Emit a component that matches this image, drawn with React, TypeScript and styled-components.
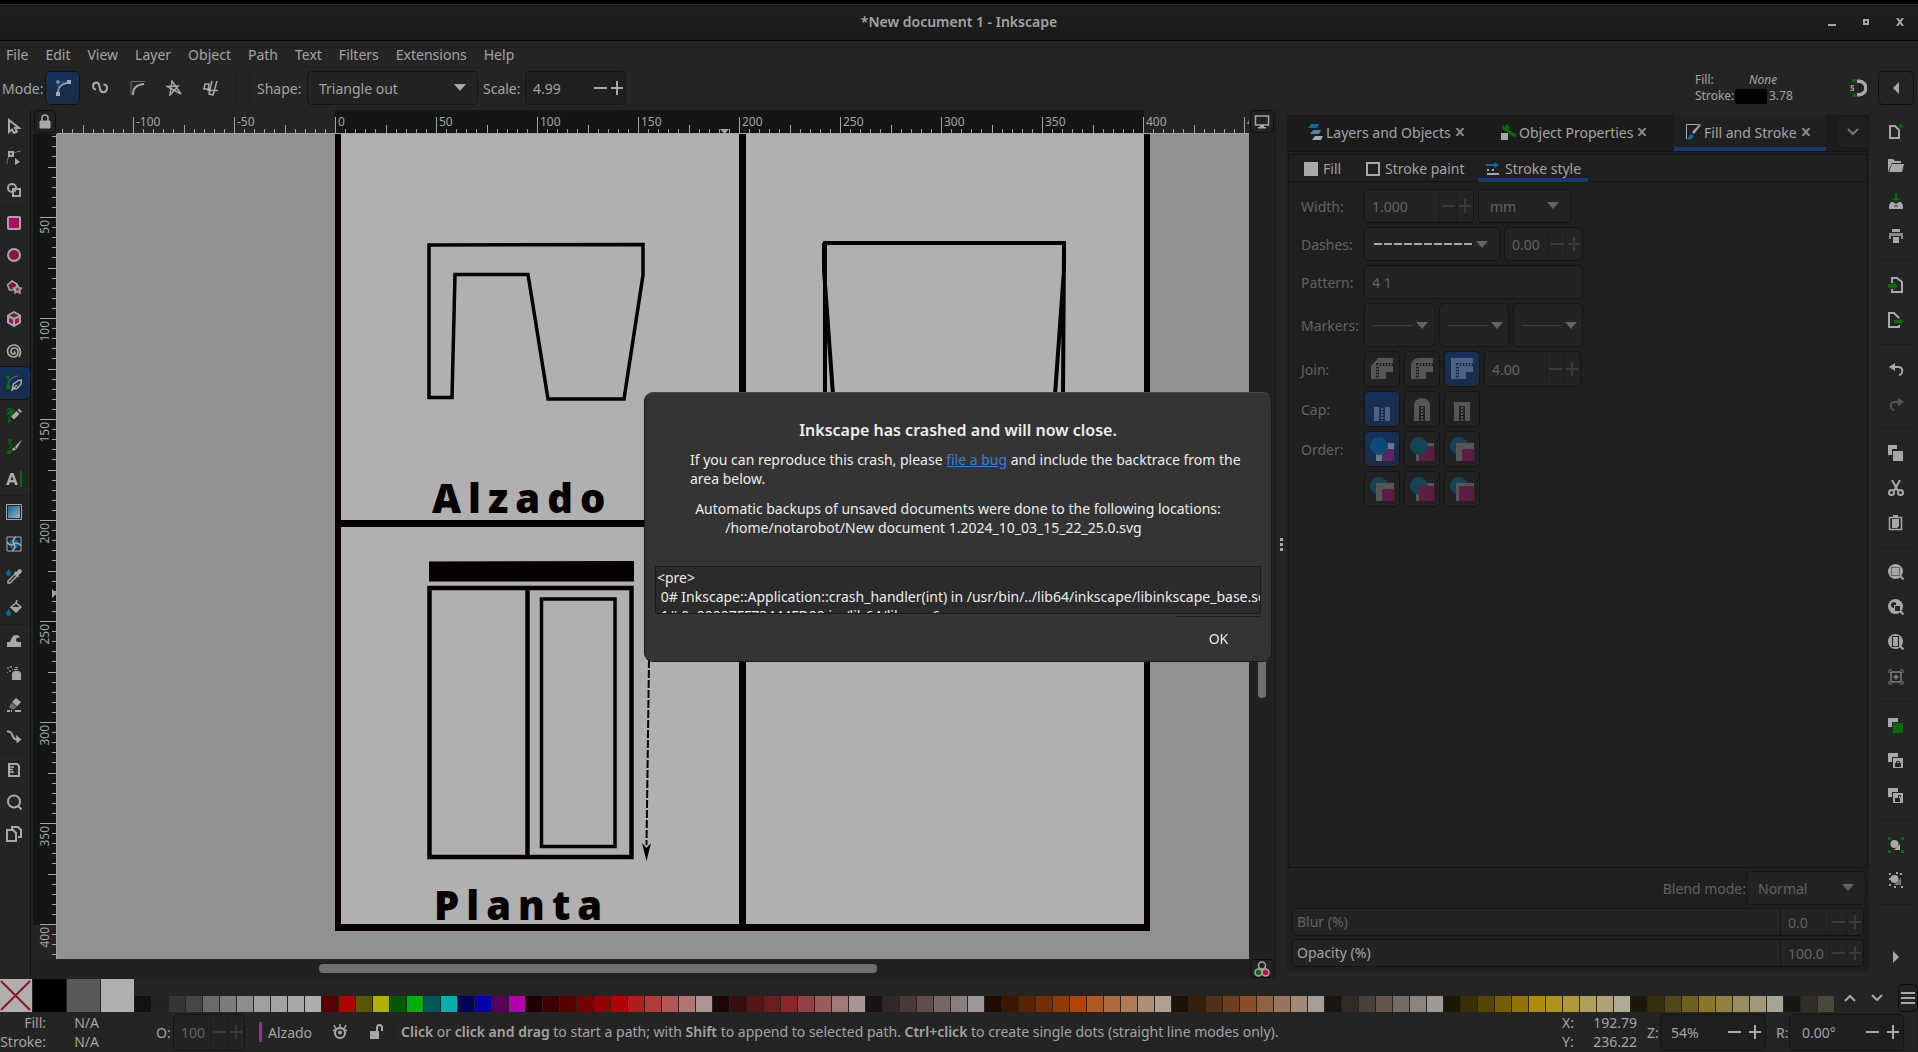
import React from "react";
import styled, { createGlobalStyle, css } from "styled-components";

const c = {
  text: "#a4a4a4",
  dim: "#636363",
  faint: "#3a3a3a",
  icon: "#a8a8a8",
  bg: "#242424",
  panel: "#1f1f1f",
  dark: "#1b1b1b",
  line: "#141414",
  accent: "#153a6f",
  green: "#046c0b",
  pink: "#b00a5f",
  blue: "#0a689c",
  ink: "#060000",
  page: "#b0b0b0",
  desk: "#919191",
};

const Global = createGlobalStyle`
  * { box-sizing: border-box; }
  body { margin: 0; background: ${c.bg}; }
  body, button, input, select, textarea {
    font-family: "Noto Sans", "Open Sans", sans-serif;
    font-size: 14px;
    line-height: 19px;
    color: ${c.text};
  }
  button, input, select, textarea { margin: 0; padding: 0; border: 0; background: none; outline: 0; }
  svg { display: block; flex: none; }
`;

/* ---------- shared controls ---------- */

const activeFill = css`
  background: linear-gradient(#14305a, #1a2c47);
`;

const Window = styled.div`
  display: flex;
  flex-direction: column;
  min-height: 100vh;
  border-top: 4px solid #000;
`;

const Field = styled.span<{ $w: number; $h?: number; $lit?: boolean }>`
  position: relative;
  display: inline-flex;
  align-items: stretch;
  flex: none;
  width: ${(p) => p.$w}px;
  height: ${(p) => p.$h ?? 34}px;
  border: 1px solid ${c.line};
  border-radius: 5px;
  background: ${(p) => (p.$lit ? "#1f1f1f" : "#232323")};
`;

const FieldInput = styled.input<{ $dim?: boolean; $pad?: number }>`
  flex: 1;
  min-width: 0;
  width: 0;
  padding-left: ${(p) => p.$pad ?? 7}px;
  color: ${(p) => (p.$dim ? c.dim : c.text)};
`;

const StepButton = styled.button<{ $dim?: boolean; $w?: number }>`
  display: grid;
  place-items: center;
  width: ${(p) => p.$w ?? 17}px;
  border-left: 1px solid #1d1d1d;
  color: ${(p) => (p.$dim ? c.faint : c.icon)};
`;

const Picker = styled.select<{ $dim?: boolean; $pad?: number }>`
  appearance: none;
  width: 100%;
  padding: 0 28px 0 ${(p) => p.$pad ?? 11}px;
  color: ${(p) => (p.$dim ? c.dim : c.text)};
`;

const PickerArrow = styled.svg<{ $dim?: boolean }>`
  position: absolute;
  right: 11px;
  top: 50%;
  margin-top: -4px;
  pointer-events: none;
  color: ${(p) => (p.$dim ? c.dim : c.icon)};
`;

const MINUS = "M0 6h13v2H0z";
const PLUS = "M0 6h5V0h2v6h5v2H7v6H5V8H0z";

function Steps({ label, dim, w }: { label: string; dim?: boolean; w?: number }) {
  return (
    <>
      <StepButton type="button" $dim={dim} $w={w} aria-label={`Decrease ${label}`}>
        <svg width="13" height="14"><path d={MINUS} fill="currentColor" /></svg>
      </StepButton>
      <StepButton type="button" $dim={dim} $w={w} aria-label={`Increase ${label}`}>
        <svg width="12" height="14"><path d={PLUS} fill="currentColor" /></svg>
      </StepButton>
    </>
  );
}

type SpinProps = { id?: string; label: string; value: string; w: number; h?: number; dim?: boolean; step?: number; pad?: number; lit?: boolean };
function Spin({ id, label, value, w, h, dim, step, pad, lit }: SpinProps) {
  return (
    <Field $w={w} $h={h} $lit={lit}>
      <FieldInput id={id} aria-label={id ? undefined : label} defaultValue={value} $dim={dim} $pad={pad} />
      <Steps label={label} dim={dim} w={step} />
    </Field>
  );
}

function Drop({ id, label, value, w, dim }: { id?: string; label: string; value: string; w: number; dim?: boolean }) {
  return (
    <Field $w={w}>
      <Picker id={id} aria-label={id ? undefined : label} $dim={dim} defaultValue={value}>
        <option>{value}</option>
      </Picker>
      <PickerArrow width="12" height="7" $dim={dim}><path d="M0 0h12L6 7z" fill="currentColor" /></PickerArrow>
    </Field>
  );
}

function Glyph({ children, size = 16 }: { children: React.ReactNode; size?: number }) {
  return (
    <svg width={size} height={size} viewBox="0 0 16 16" fill="none" stroke="none" aria-hidden="true">
      {children}
    </svg>
  );
}

/* ---------- title, menu, tool options ---------- */

const TitleBar = styled.header`
  display: grid;
  grid-template-columns: 1fr auto 1fr;
  align-items: center;
  height: 37px;
  padding-bottom: 2px;
  border-top: 1px solid #2b2b2b;
  border-bottom: 1px solid #080808;
  background: linear-gradient(#1e1e1e, #1a1a1a);
`;
const Title = styled.h1`
  grid-column: 2;
  margin: 0;
  font-size: 14px;
  line-height: 19px;
  font-weight: 600;
`;
const WindowButtons = styled.div`
  display: flex;
  justify-content: flex-end;
  gap: 18px;
  padding-right: 10px;
`;
const WindowButton = styled.button`
  display: grid;
  place-items: center;
  width: 16px;
  height: 20px;
`;

const MenuBar = styled.nav`
  display: flex;
  gap: 17px;
  height: 27px;
  padding: 4px 6px;
  border-bottom: 1px solid #202020;
`;
const MenuItem = styled.button`
  height: 19px;
`;

const ToolOptions = styled.div`
  display: flex;
  align-items: center;
  height: 42px;
  padding: 0 4px 2px 2px;
`;
const OptionLabel = styled.label<{ $w: number; $before?: number }>`
  width: ${(p) => p.$w}px;
  margin-left: ${(p) => p.$before ?? 0}px;
  white-space: nowrap;
`;
const ModeGroup = styled.div`
  display: flex;
  gap: 2px;
`;
const ModeButton = styled.button<{ $on?: boolean }>`
  display: grid;
  place-items: center;
  width: 35px;
  height: 34px;
  border: 1px solid ${(p) => (p.$on ? c.line : "transparent")};
  border-radius: 5px;
  ${(p) => p.$on && activeFill}
`;
const Divider = styled.i<{ $gap: number }>`
  width: 1px;
  height: 34px;
  margin-left: ${(p) => p.$gap}px;
  background: #1f1f1f;
`;
const StyleSummary = styled.div`
  display: grid;
  grid-template-columns: 38px 32px auto;
  grid-template-rows: 16px 16px;
  column-gap: 2px;
  margin-left: auto;
  margin-right: 56px;
  width: 98px;
  font-size: 12px;
  line-height: 16px;
  & em { grid-column: 2 / 4; padding-left: 14px; }
`;
const StrokeSwatch = styled.i`
  align-self: center;
  height: 15px;
  border-radius: 2px;
  background: ${c.ink};
`;
const SnapButton = styled.button`
  width: 18px;
  margin-right: 11px;
`;
const CollapseButton = styled.button`
  display: grid;
  place-items: center;
  width: 36px;
  height: 34px;
  border: 1px solid #101010;
  border-radius: 5px;
`;

const S = { stroke: c.icon, strokeWidth: 2 };
const modes: [string, React.ReactNode][] = [
  ["Bézier path", <><path d="M3 13C3 7 7 3 13 3" {...S} strokeWidth={1.5} /><path d="M1 12h4v4H1zM12 0h4v4h-4z" fill={c.icon} /><path d="M3 2v8M4 2h8" stroke="#4a6486" /><circle cx="3" cy="2" r="2" fill="#6880a0" /></>],
  ["Spiro path", <path d="M4 9.500C0 9.500 0 2.500 4.500 2.500 8 2.500 7 6 8 9c1 5 7 4 7-1 0-2.500-1-3.500-3.500-3.500" {...S} />],
  ["BSpline path", <><path d="M2 15V1.500h14" stroke="#6a6a6a" /><path d="M4 15C4 8 7 5 15 4" {...S} /></>],
  ["Straight segments", <path d="M15 14 1 6.500 12 6 4 15 6 1 15 14" {...S} strokeWidth={1.500} />],
  ["Paraxial segments", <path d="M15 10.500H5L6 4H2L1 9h7M9 1 7 9M14 1l-4 14-4-1 1-4" {...S} strokeWidth={1.500} />],
];

function TopBars() {
  return (
    <>
      <TitleBar>
        <Title>*New document 1 - Inkscape</Title>
        <WindowButtons>
          <WindowButton aria-label="Minimize"><svg width="8" height="10"><path d="M0 7h8v2H0z" fill={c.icon} /></svg></WindowButton>
          <WindowButton aria-label="Maximize"><svg width="6" height="6"><path d="M1 1h4v4H1z" stroke={c.icon} strokeWidth="2" fill="none" /></svg></WindowButton>
          <WindowButton aria-label="Close"><svg width="8" height="8"><path d="M1 0l6 8M7 0L1 8" stroke={c.icon} strokeWidth="2" /></svg></WindowButton>
        </WindowButtons>
      </TitleBar>
      <MenuBar>
        {["File", "Edit", "View", "Layer", "Object", "Path", "Text", "Filters", "Extensions", "Help"].map((m) => (
          <MenuItem key={m}>{m}</MenuItem>
        ))}
      </MenuBar>
      <ToolOptions>
        <OptionLabel as="span" $w={43}>Mode:</OptionLabel>
        <ModeGroup>
          {modes.map(([name, art], i) => (
            <ModeButton key={name} $on={i === 0} aria-label={name} aria-pressed={i === 0}><Glyph>{art}</Glyph></ModeButton>
          ))}
        </ModeGroup>
        <Divider $gap={7} />
        <Divider $gap={13} />
        <OptionLabel htmlFor="shape" $w={50} $before={7}>Shape:</OptionLabel>
        <Drop id="shape" label="Shape" value="Triangle out" w={171} />
        <OptionLabel htmlFor="scale" $w={42} $before={5}>Scale:</OptionLabel>
        <Spin id="scale" label="Scale" value="4.99" w={101} lit />
        <StyleSummary>
          <span>Fill:</span><em>None</em>
          <span>Stroke:</span><StrokeSwatch /><span>3.78</span>
        </StyleSummary>
        <SnapButton aria-label="Snapping">
          <Glyph size={18}>
            <path d="M7 2h2a6 6 0 0 1 0 12H7" stroke={c.icon} strokeWidth="3" />
            <path d="M3 0h3v3H3zM3 13h3v3H3z" fill={c.green} />
            <path d="M4.500 6H2v2h2v2H1" stroke={c.icon} />
          </Glyph>
        </SnapButton>
        <CollapseButton aria-label="Show snap options"><svg width="6" height="12"><path d="M6 0v12L0 6z" fill={c.icon} /></svg></CollapseButton>
      </ToolOptions>
    </>
  );
}

/* ---------- left toolbox ---------- */

const Main = styled.main`
  display: flex;
  flex: 1;
  min-height: 0;
`;
const Toolbox = styled.aside`
  display: flex;
  flex-direction: column;
  flex: none;
  width: 31px;
  margin-right: 2px;
  border-right: 1px solid #121212;
`;
const ToolGroup = styled.div`
  display: flex;
  flex-direction: column;
  & + & { border-top: 1px solid #1e1e1e; }
`;
const Tool = styled.button<{ $on?: boolean }>`
  display: flex;
  align-items: center;
  width: 30px;
  height: 32px;
  padding-left: 6px;
  ${(p) => p.$on && css`${activeFill} border-radius: 0 5px 5px 0; box-shadow: 0 0 0 1px ${c.line};`}
`;

const toolGroups: [string, React.ReactNode][][] = [
  [
    ["Select", <path d="M3 2v12l3-2.500 2 3.500 3-1.500-2-3.500h4z" {...S} />],
    ["Node", <><path d="M1 14C1 8 3 3 15 1" stroke="#777" /><path d="M3 2h4v4H3z" {...S} /><path d="M9 8v7l5-3z" fill={c.icon} /></>],
    ["Shape builder", <><circle cx="6" cy="6" r="4" {...S} /><path d="M7 7h7v7H7z" {...S} /></>],
  ],
  [
    ["Rectangle", <rect x="2" y="2" width="12" height="12" rx="1" fill={c.pink} {...S} />],
    ["Ellipse", <circle cx="8" cy="8" r="6" fill="#8c1250" {...S} />],
    ["Star", <><path d="M6 2l5 3-1.500 6h-6L1.500 6z" fill="#7c1648" {...S} strokeWidth={1.500} /><path d="M11.500 6l1.300 2.700 2.700.4-2 2 .5 3-2.500-1.400L9 14l.5-3-2-2 2.700-.3z" fill="#7a3b58" {...S} strokeWidth={1.500} /></>],
    ["3D box", <><path d="M8 1l6 3.500v7L8 15l-6-3.500v-7z" fill={c.pink} {...S} /><path d="M8 2l5 3-5 2.500L3 5z" fill="#5a2540" /><path d="M2 5l6 3 6-3M8 8v7" {...S} /></>],
    ["Spiral", <path d="M13 14c3-5 1-12-5-12-4 0-6.500 3-6.500 6S4 14 7.500 14 12 11 12 8.500 10 5 8 5 5 6.500 5 8.500 6.500 11 8 11s1.500-2 0-2.500" {...S} strokeWidth={1.700} />],
    ["Pen", <><path d="M2 11C2 5 6 2 12 1" stroke="#5c7391" /><path d="M0 10h4v4H0z" fill={c.green} /><path d="M2 1v9" stroke={c.green} /><circle cx="2" cy="2" r="2" fill={c.green} /><path d="M6 15l1.500-6 5-3.500L15.500 5 15 9l-4 4.500-4 .5zM7 14l4-4" stroke={c.icon} strokeWidth="1.500" /></>],
    ["Pencil", <><path d="M1 3c3-3 6-2 2 2s2 1 3-1 3-1 1 1-3 3-4 6" stroke={c.green} strokeWidth="1.500" /><path d="M2 11l4 3-4 2z" fill={c.green} /><path d="M5 9.500L10.500 4l3 3L8 12.500zM11.500 3l1.500-1.500 3 3L14.500 6z" fill={c.icon} /></>],
    ["Calligraphy", <><path d="M1 1h4L3 4l3 2-3 4" stroke={c.green} strokeWidth="1.500" /><path d="M1 14c1-3 2-3 4-3l1 2c-1 2-3 3-5 2z" fill={c.green} /><path d="M6 10l1 2 3-1.500L8.500 8zM9 7.500l6-6 .5.500-5 8z" fill={c.icon} /></>],
    ["Text", <><path d="M0 14L4.500 2h3L12 14H9l-.8-2.500H3.800L3 14zM4.600 9h2.800L6 5z" fill={c.icon} /><path d="M14 0h2v16h-2z" fill={c.green} /></>],
  ],
  [
    ["Gradient", <><defs><linearGradient id="tg" x2="1" y2="1"><stop stopColor="#08639a" /><stop offset="1" stopColor="#9bb4c4" /></linearGradient></defs><path d="M.5.5h15v15H.5z" stroke={c.icon} /><path d="M2 2h12v12H2z" fill="url(#tg)" /></>],
    ["Mesh gradient", <><path d="M1 1h14v14H1z" stroke={c.icon} /><circle cx="8" cy="8" r="5" fill={c.blue} /><path d="M8 8C6 5 7 3 10 1M8 8c3-2 5-1 7 2M8 8c2 3 1 5-2 7M8 8c-3 2-5 1-7-2" stroke={c.icon} strokeWidth="1.500" /></>],
    ["Dropper", <><path d="M2.500 1C4 3 5 4 5 5.500a2.500 2.500 0 0 1-5 0C0 4 1.500 3 2.500 1z" fill={c.blue} /><path d="M9 6l2 2-7 7H2v-2z" stroke={c.icon} strokeWidth="1.500" /><path d="M8 4.500l1.500-1 1 .5L13 1l3 1-.5 2.500L12.500 7l.5 1-1 1.500z" fill={c.icon} /></>],
    ["Paint bucket", <><path d="M2.500 9C4 11 5 12 5 13.500a2.500 2.500 0 0 1-5 0C0 12 1.500 11 2.500 9z" fill={c.blue} /><path d="M4 7h11l-5 5.500z" fill={c.icon} /><path d="M5 7l5-4 5 4-5 5zM10 3l1-3" stroke={c.icon} strokeWidth="1.500" /></>],
  ],
  [
    ["Tweak", <path d="M1 14V9h3c1-2 2-7 6-7 3 0 4 2 4 3-2-1-4 0-4 2s2 2 5 2v5z" fill={c.icon} />],
    ["Spray", <><path d="M6 8l2-2h5l2 2v7H6zM8 4h4v1H8zM9 2h3v1H9z" fill={c.icon} /><path d="M1 2h2v2H1zM4 1h2v2H4zM3 5h2v2H3zM1 7h1v1H1zM6 4h1v1H6z" fill="#777" /></>],
    ["Eraser", <><path d="M6 5l4-4 5 4-4 4.500z" fill={c.icon} /><path d="M5.500 5.500l5 4.500L7 13l-4-3z" fill="#6c6c6c" /><path d="M1 13h3v2H1zM9 13h6v2H9zM5 13h1v2H5z" fill={c.icon} /></>],
    ["Connector", <><path d="M1 2.500c8-1 3 8 10 8" {...S} /><path d="M10 6l5.500 4.500-5 4z" fill={c.icon} /></>],
  ],
  [
    ["Measure", <><path d="M3 2h8l2 2v10H3z" {...S} /><path d="M4 5h4M4 7.500h3M4 10h4" stroke={c.icon} strokeWidth="1.500" /></>],
    ["Zoom", <><circle cx="8" cy="7.500" r="6" {...S} /><path d="M12 12l3.500 3.500" {...S} /></>],
    ["Pages", <><path d="M1 4h6l3 3v8H1zM6 3V1h6l3 3v7h-3" {...S} /></>],
  ],
];

/* ---------- canvas with rulers ---------- */

const CanvasGrid = styled.section`
  display: grid;
  grid-template-columns: 24px minmax(0, 1fr) 26px;
  grid-template-rows: 24px minmax(0, 1fr) 20px;
  flex: 1;
  min-width: 0;
  background: #212121;
`;
const CornerButton = styled.button`
  display: grid;
  place-items: center;
  margin: 0 1px 1px;
  border: 1px solid #0e0e0e;
  border-radius: 5px;
  background: #222;
`;
const Fill = styled.svg`
  width: 100%;
  height: 100%;
  overflow: hidden;
`;
const HTrack = styled.div`
  grid-column: 1 / 3;
  display: flex;
  align-items: center;
  padding-left: 286px;
  padding-bottom: 2px;
`;
const HThumb = styled.div`
  width: 60%;
  height: 9px;
  border-radius: 4px;
  background: #6f6f6f;
`;
const VTrack = styled.div`
  display: flex;
  justify-content: center;
  padding-top: 300px;
`;
const VThumb = styled.div`
  width: 8px;
  height: 264px;
  border-radius: 4px;
  background: #6f6f6f;
`;

const UNIT = 2.02;
const marks = (from: number, to: number) => {
  const out: number[] = [];
  for (let v = from; v <= to; v += 5) out.push(v);
  return out;
};
const tickLen = (v: number) => (v % 50 === 0 ? 16 : v % 25 === 0 ? 8 : 4);

function HRuler() {
  return (
    <Fill fontSize="12" fill={c.text}>
      <rect width="100%" height="24" fill={c.bg} />
      <rect x="278" width="809" height="24" fill="#141615" />
      {marks(-135, 450).map((v) => {
        const x = Math.floor(278.5 + v * UNIT);
        const len = tickLen(v);
        return (
          <React.Fragment key={v}>
            <rect x={x} y={23 - len} width="1" height={len} />
            {len === 16 && <text x={x + 3} y="16">{v}</text>}
          </React.Fragment>
        );
      })}
      <path d="M663 19h9l-4.500 5z" />
      <rect y="23" width="100%" height="1" />
    </Fill>
  );
}

function VRuler() {
  return (
    <Fill fontSize="12" fill={c.text}>
      <rect width="24" height="100%" fill={c.bg} />
      <rect width="24" height="791" fill="#141615" />
      {marks(10, 415).map((v) => {
        const y = Math.floor(-17.5 + v * UNIT);
        const len = tickLen(v);
        return (
          <React.Fragment key={v}>
            <rect x={23 - len} y={y} width={len} height="1" />
            {len === 16 && <text transform={`translate(16 ${y + 3}) rotate(-90)`} textAnchor="end">{v}</text>}
          </React.Fragment>
        );
      })}
      <path d="M19 455v9l5-4.500z" />
      <rect x="23" width="1" height="100%" />
    </Fill>
  );
}

const Caption = styled.text`
  font: 900 40px "Noto Sans", sans-serif;
  letter-spacing: 7px;
  fill: ${c.ink};
`;

function Drawing() {
  return (
    <Fill>
      <rect width="100%" height="100%" fill={c.desk} />
      <g transform="translate(-57 -134)">
        <path d="M335 134h809v791H335z" fill={c.page} />
        <path d="M335 134h6v797h-6zM739 134h7v797h-7zM1144 134h6v797h-6zM335 520h815v7H335zM335 924h815v7H335z" fill={c.ink} />
        <g fill="none" stroke={c.ink} strokeWidth="4">
          <path d="M429 245L643 244.500V275L624 399H548L528 274.500H455L452 397.500H429z" strokeWidth="3.500" />
          <path d="M825 395V243H1064L1063 395M824 243v27l9 125M1064 243v27l-9 125" />
          <path d="M429.500 588h202v269h-202zM527.500 588v269" strokeWidth="4.500" />
          <path d="M541.500 599h73.500v247.500h-73.500z" strokeWidth="3.500" />
          <path d="M649 660L646.500 845" strokeWidth="2" strokeDasharray="8 2" />
        </g>
        <path d="M429 561.500L634 561v20.500H429zM642 843l4.500 5 4.500-5-4.500 18z" fill={c.ink} />
        <Caption x="432" y="513">Alzado</Caption>
        <Caption x="434" y="920">Planta</Caption>
      </g>
    </Fill>
  );
}

function Canvas() {
  return (
    <CanvasGrid>
      <CornerButton aria-label="Lock guides">
        <svg width="12" height="15"><path d="M1 7h10v7H1z" fill={c.icon} stroke={c.icon} /><path d="M3 7V4q0-3 3-3t3 3v3" stroke={c.icon} strokeWidth="1.500" fill="none" /></svg>
      </CornerButton>
      <HRuler />
      <CornerButton aria-label="Display mode">
        <svg width="16" height="14"><path d="M1.500 1h13v9h-13z" fill="none" stroke={c.icon} strokeWidth="1.500" /><path d="M6 10h4v2h2v1.500H4V12h2z" fill={c.icon} /></svg>
      </CornerButton>
      <VRuler />
      <Drawing />
      <VTrack><VThumb /></VTrack>
      <HTrack><HThumb /></HTrack>
      <CornerButton aria-label="Color management">
        <svg width="16" height="16"><g stroke={c.icon} strokeWidth="1.500" fill="none"><circle cx="8" cy="4.500" r="3.500" /><circle cx="4.500" cy="11.500" r="3.500" fill={c.green} /><circle cx="11.500" cy="11.500" r="3.500" fill={c.pink} /></g></svg>
      </CornerButton>
    </CanvasGrid>
  );
}

/* ---------- docked dialogs ---------- */

const Splitter = styled.div`
  display: grid;
  place-items: center;
  flex: none;
  width: 12px;
  border-left: 1px solid #1b1b1b;
`;
const Dock = styled.section`
  display: flex;
  flex-direction: column;
  flex: none;
  width: 582px;
  margin: 5px 0 7px;
  background: ${c.panel};
`;
const DockTabs = styled.div`
  display: flex;
  height: 37px;
  margin-bottom: 2px;
  border-bottom: 1px solid ${c.line};
  background: ${c.dark};
`;
const DockTab = styled.div<{ $w: number; $on?: boolean; $pad: number }>`
  display: flex;
  align-items: center;
  gap: 2px;
  width: ${(p) => p.$w}px;
  padding-left: ${(p) => p.$pad}px;
  border-bottom: ${(p) => (p.$on ? `4px solid ${c.accent}` : "0")};
  padding-top: ${(p) => (p.$on ? 2 : 0)}px;
  padding-bottom: ${(p) => (p.$on ? 0 : 2)}px;
  background: ${(p) => (p.$on ? "#202020" : "none")};
  white-space: nowrap;
`;
const CloseTab = styled.button`
  display: grid;
  place-items: center;
  width: 14px;
  height: 18px;
`;
const TabMenu = styled.button`
  display: grid;
  place-items: center;
  width: 30px;
  height: 30px;
  margin: 2px 1px 0 auto;
  border-radius: 5px;
  background: #1f1f1f;
`;
const Frame = styled.div`
  flex: 1;
  margin: 0 1px;
  border: 1px solid ${c.line};
`;
const SubTabs = styled.div`
  display: flex;
  height: 27px;
  padding-left: 7px;
  border-bottom: 1px solid ${c.line};
`;
const SubTab = styled.button<{ $w: number; $on?: boolean }>`
  display: flex;
  align-items: center;
  gap: 5px;
  width: ${(p) => p.$w}px;
  height: 27px;
  padding: ${(p) => (p.$on ? "4px" : "0")} 8px 0;
  border-bottom: ${(p) => (p.$on ? `4px solid ${c.accent}` : "0")};
  white-space: nowrap;
`;
const Form = styled.div`
  display: grid;
  gap: 4px;
  padding: 7px 12px;
`;
const FormRow = styled.div`
  display: flex;
  align-items: center;
  gap: 4px;
`;
const FormLabel = styled.label`
  width: 59px;
  white-space: nowrap;
  color: ${c.dim};
`;
const LineButton = styled.button<{ $w: number; $h: number }>`
  display: flex;
  align-items: center;
  gap: 3px;
  width: ${(p) => p.$w}px;
  height: ${(p) => p.$h}px;
  padding: 0 8px;
  border: 1px solid ${c.line};
  border-radius: 5px;
  background: #232323;
`;
const ToggleButton = styled.button<{ $on?: boolean }>`
  display: grid;
  place-items: center;
  width: 36px;
  height: 36px;
  border: 1px solid ${c.line};
  border-radius: 5px;
  background: #222;
  ${(p) => p.$on && activeFill}
`;
const BlendRow = styled.div`
  display: flex;
  align-items: center;
  justify-content: flex-end;
  padding: 3px 3px 3px 0;
  color: ${c.dim};
`;
const ScaleBar = styled.div`
  display: flex;
  height: 28px;
  margin: 0 5px 3px;
  border: 1px solid ${c.line};
  border-radius: 4px;
  background: #232323;
  &:last-child { margin-bottom: 5px; }
`;
const ScaleLabel = styled.label<{ $dim?: boolean }>`
  flex: 1;
  padding: 3px 4px;
  border-right: 1px solid ${c.line};
  color: ${(p) => (p.$dim ? c.dim : c.text)};
`;
const ScaleValue = styled.span`
  display: flex;
  width: 82px;
`;

const G = "#565656";
const joinArt = (corner: string, fill: string, hole: string) => (
  <svg width="22" height="22">
    <path d={`${corner}V14H15V21H9V14H9V21H0`} fill={fill} />
    <path d="M6.500 21V6.500H22" fill="none" stroke={hole} strokeWidth="3" />
    <path d="M6.500 21V6.500H22" fill="none" stroke={fill} strokeWidth="2" strokeDasharray="2 1" />
  </svg>
);
const capArt = (top: string, fill: string, hole: string, y: number) => (
  <svg width="22" height="24">
    <path d={top} fill={fill} />
    <path d={`M8 ${y}h6V24H8z`} fill={hole} />
    <path d={`M11 ${y + 1}V24`} stroke={fill} strokeWidth="2" strokeDasharray="2 1" />
  </svg>
);
const orderArt = (order: string, on?: boolean) => {
  const parts: Record<string, React.ReactNode> = {
    f: <path key="f" d="M12 12h12v12H12z" fill={on ? "#5a2560" : "#5c1c43"} />,
    F: <path key="F" d="M9 9h15v15H9z" fill="#5c1c43" />,
    s: <path key="s" d="M6 6h18v6H12v12H6z" fill={on ? "#6b7789" : G} />,
    S: <path key="S" d="M6 6h18v3H9v15H6z" fill={G} />,
    m: <ellipse key="m" cx="9" cy="9" rx="9" ry="9" fill={on ? "#0d4a78" : "#154459"} />,
  };
  return <svg width="24" height="24">{order.split("").map((k) => parts[k])}</svg>;
};

const Arrow = () => <svg width="12" height="7"><path d="M0 0h12L6 7z" fill={c.dim} /></svg>;
const Cross = () => <svg width="8" height="8"><path d="M.5 0l7 8M7.500 0l-7 8" stroke="#8a8a8a" strokeWidth="2" /></svg>;

function DockPanel() {
  return (
    <Dock>
      <DockTabs>
        <DockTab $w={193} $pad={21}>
          <Glyph><path d="M3 0h8L9 4H0z" fill={c.blue} /><path d="M5 6h8l-2 4H2z" fill="#4d84a5" /><path d="M7 12h8l-2 4H4z" fill={c.icon} /></Glyph>
          Layers and Objects
          <CloseTab aria-label="Close Layers and Objects"><Cross /></CloseTab>
        </DockTab>
        <DockTab $w={194} $pad={21}>
          <Glyph><path d="M0 9h7v7H0z" fill={c.icon} /><path d="M1 1l3 2 1-3 3 2v4l6 4 1-1v4l-4-1L5 7 2 6z" fill={c.green} /></Glyph>
          Object Properties
          <CloseTab aria-label="Close Object Properties"><Cross /></CloseTab>
        </DockTab>
        <DockTab $w={152} $pad={12} $on>
          <Glyph><path d="M.5 15V.5H13" stroke={c.icon} /><path d="M6 8l8-8 1 1-7 9z" fill={c.icon} /><path d="M5 10l3 2c-1 2-3 4-7 4 2-2 1-5 4-6z" fill={c.blue} /></Glyph>
          Fill and Stroke
          <CloseTab aria-label="Close Fill and Stroke"><Cross /></CloseTab>
        </DockTab>
        <TabMenu aria-label="Dialog list"><svg width="12" height="8"><path d="M1 1l5 5 5-5" fill="none" stroke="#777" strokeWidth="2" /></svg></TabMenu>
      </DockTabs>
      <Frame>
        <SubTabs>
          <SubTab $w={62}><svg width="14" height="14"><path d="M0 0h14v14H0z" fill={c.icon} /></svg>Fill</SubTab>
          <SubTab $w={120}><svg width="14" height="14"><path d="M1 1h12v12H1z" fill="none" stroke={c.icon} strokeWidth="2" /></svg>Stroke paint</SubTab>
          <SubTab $w={110} $on><svg width="14" height="14"><path d="M0 2h8V0l5 3-5 3V4H0z" fill={c.blue} /><path d="M1 7h2v2H1zM6 7h2v2H6zM1 11h12v2H1z" fill={c.icon} /></svg>Stroke style</SubTab>
        </SubTabs>
        <Form>
          <FormRow>
            <FormLabel htmlFor="width">Width:</FormLabel>
            <Spin id="width" label="Width" value="1.000" w={110} dim />
            <Drop label="Unit" value="mm" w={93} dim />
          </FormRow>
          <FormRow>
            <FormLabel as="span">Dashes:</FormLabel>
            <LineButton $w={136} $h={34} aria-label="Dash pattern" aria-haspopup="listbox">
              <svg width="100" height="2"><path d="M1 1h98" stroke={c.icon} strokeWidth="2" strokeDasharray="8 2" /></svg>
              <Arrow />
            </LineButton>
            <Spin label="Dash offset" value="0.00" w={79} dim />
          </FormRow>
          <FormRow>
            <FormLabel htmlFor="pattern">Pattern:</FormLabel>
            <Field $w={219}><FieldInput id="pattern" defaultValue="4 1" $dim /></Field>
          </FormRow>
          <FormRow>
            <FormLabel as="span">Markers:</FormLabel>
            {["Start", "Mid", "End"].map((m) => (
              <LineButton key={m} $w={m === "Start" ? 71 : 70} $h={44} aria-label={`${m} marker`} aria-haspopup="listbox">
                <svg width="40" height="1"><path d="M0 0h40v1H0z" fill="#3e3e3e" /></svg>
                <Arrow />
              </LineButton>
            ))}
          </FormRow>
          <FormRow>
            <FormLabel as="span">Join:</FormLabel>
            <ToggleButton aria-label="Bevel join">{joinArt("M0 21V8L7 0H22", G, "#222")}</ToggleButton>
            <ToggleButton aria-label="Round join">{joinArt("M0 21V9Q0 0 9 0H22", G, "#222")}</ToggleButton>
            <ToggleButton $on aria-label="Miter join" aria-pressed="true">{joinArt("M0 21V0H22", "#4e6383", "#183057")}</ToggleButton>
            <Spin label="Miter limit" value="4.00" w={97} h={36} dim />
          </FormRow>
          <FormRow>
            <FormLabel as="span">Cap:</FormLabel>
            <ToggleButton $on aria-label="Butt cap" aria-pressed="true">{capArt("M3 10h16v14H3z", "#4e6383", "#182f54", 10)}</ToggleButton>
            <ToggleButton aria-label="Round cap">{capArt("M3 24V9a8 8 0 0 1 16 0v15z", G, "#222", 9)}</ToggleButton>
            <ToggleButton aria-label="Square cap">{capArt("M3 5h16v19H3z", G, "#222", 9)}</ToggleButton>
          </FormRow>
          <FormRow>
            <FormLabel as="span">Order:</FormLabel>
            <ToggleButton $on aria-label="Fill, stroke, markers" aria-pressed="true">{orderArt("sfm", true)}</ToggleButton>
            <ToggleButton aria-label="Stroke, fill, markers">{orderArt("SFm")}</ToggleButton>
            <ToggleButton aria-label="Fill, markers, stroke">{orderArt("mfs")}</ToggleButton>
          </FormRow>
          <FormRow>
            <FormLabel as="span" />
            <ToggleButton aria-label="Markers, fill, stroke">{orderArt("mfs")}</ToggleButton>
            <ToggleButton aria-label="Stroke, markers, fill">{orderArt("SmF")}</ToggleButton>
            <ToggleButton aria-label="Markers, stroke, fill">{orderArt("mSF")}</ToggleButton>
          </FormRow>
        </Form>
      </Frame>
      <BlendRow>
        <label htmlFor="blend">Blend mode:</label>
        <Drop id="blend" label="Blend mode" value="Normal" w={120} dim />
      </BlendRow>
      <ScaleBar>
        <ScaleLabel htmlFor="blur" $dim>Blur (%)</ScaleLabel>
        <ScaleValue><FieldInput id="blur" defaultValue="0.0" $dim /><Steps label="blur" dim /></ScaleValue>
      </ScaleBar>
      <ScaleBar>
        <ScaleLabel htmlFor="opacity">Opacity (%)</ScaleLabel>
        <ScaleValue><FieldInput id="opacity" defaultValue="100.0" $dim /><Steps label="opacity" dim /></ScaleValue>
      </ScaleBar>
    </Dock>
  );
}

/* ---------- right command bar ---------- */

const CommandBar = styled.aside`
  display: flex;
  flex-direction: column;
  flex: none;
  width: 49px;
  padding: 3px 4px 5px 9px;
`;
const CommandGroup = styled.div`
  display: flex;
  flex-direction: column;
  & + & { margin-top: 7px; padding-top: 6px; border-top: 1px solid #1d1d1d; }
`;
const Command = styled.button`
  display: grid;
  place-items: center;
  height: 35px;
`;

const lens = <><circle cx="7.500" cy="7.500" r="7.500" fill={c.icon} /><path d="M12 12l3.500 3.500" {...S} /></>;
const twoSquares = (front: string) => (
  <>
    <path d="M0 0h10v4H4v5H0z" fill={c.icon} />
    <path d="M5 5h10v10H5z" fill={front} />
  </>
);

const commandGroups: [string, React.ReactNode][][] = [
  [
    ["New", <><path d="M2 3h5l4 4v8H2z" {...S} /><path d="M13 0l1 2h2l-1.500 1.500L15 6l-2-1.500L11 6l.5-2.500L10 2h2z" fill={c.green} /></>],
    ["Open", <><path d="M0 14V1h5l2 2h6v2H4z" fill={c.icon} /><path d="M4 6h12l-2 8H1z" fill={c.icon} /></>],
    ["Save", <><path d="M7 0h2v5h3L8 9 4 5h3z" fill={c.green} /><path d="M3 9h2l3 2 3-2h2l2 3v4H1v-4z" fill={c.icon} /><path d="M6 13h4" stroke={c.bg} /></>],
    ["Print", <><path d="M4 1h8v3H4zM5 9h6v6H5z" fill={c.icon} /><path d="M1 5h14v6h-2V8H3v3H1z" fill="#8a8a8a" /></>],
  ],
  [
    ["Import", <><path d="M4 6V1h5l5 4v10H4v-3" {...S} /><path d="M0 7h6V5l4 4-4 4v-2H0z" fill={c.green} /></>],
    ["Export", <><path d="M11 13v2H1V1h5l5 5" {...S} /><path d="M6 8h5V6l5 3.500-5 3.500v-2H6z" fill={c.green} /></>],
  ],
  [
    ["Undo", <><path d="M5 6h5c6 0 5 8 1 8" {...S} /><path d="M7 2v8L1 6z" fill={c.icon} /></>],
    ["Redo", <><path d="M11 6H7c-6 0-5 8-1 8" stroke="#555" strokeWidth="2" /><path d="M10 2v8l6-4z" fill="#555" /></>],
  ],
  [
    ["Duplicate", <><path d="M0 0h9v4H4v6H0z" fill={c.icon} /><path d="M5 6h10v10H5z" fill={c.icon} /></>],
    ["Cut", <><path d="M4 0l6 11M12 0L6 11" {...S} /><circle cx="3.500" cy="12.500" r="2.500" {...S} /><circle cx="12.500" cy="12.500" r="2.500" {...S} /></>],
    ["Paste", <><path d="M1.500 2.500h12v12h-12z" stroke={c.icon} strokeWidth="1.500" /><path d="M4 4h7v7l-2 2H4zM5 0h5v3H5z" fill={c.icon} /></>],
  ],
  [
    ["Zoom selection", <>{lens}<path d="M3.500 3.500h8v8h-8z" stroke={c.bg} strokeDasharray="1 1" /></>],
    ["Zoom drawing", <>{lens}<path d="M3 7a3 3 0 0 1 5-3v2H6v3a3 3 0 0 1-3-2zM7 7h5v5H7z" fill={c.bg} /></>],
    ["Zoom page", <>{lens}<path d="M4.500 2.500h6v10h-6z" stroke={c.bg} strokeWidth="1.200" /></>],
    ["Center page", <><path d="M3 3h10v10H3zM8 5.500v5M5.500 8h5" stroke={c.icon} /><path d="M1 4V1h3M12 1h3v3M15 12v3h-3M4 15H1v-3" stroke="#777" /></>],
  ],
  [
    ["Group", twoSquares(c.green)],
    ["Lock", <>{twoSquares(c.icon)}<path d="M7 10h6v4H7z" fill={c.bg} /><path d="M8.500 10V8.500h3V10" stroke={c.bg} /></>],
    ["Unlock", <>{twoSquares(c.icon)}<path d="M7 10h5v4H7z" fill={c.bg} /><path d="M10.500 10V7.500h2V9" stroke={c.bg} /></>],
  ],
  [
    ["Select same", <><circle cx="6.500" cy="7" r="4" fill={c.icon} /><path d="M12 7v6H6z" fill={c.icon} /><path d="M0 0h3v3H0zM13 0h3v3h-3zM0 13h3v3H0zM13 13h3v3h-3z" fill={c.green} /></>],
    ["Deselect", <><circle cx="6.500" cy="7" r="4" fill={c.icon} /><path d="M13 6v7H6z" fill="#777" /><path d="M1 1h2v2H1zM8 0h2v2H8zM12 1h2v2h-2zM1 6h2v2H1zM1 12h2v2H1zM6 14h2v2H6zM13 14h2v2h-2z" fill={c.icon} /></>],
  ],
];
const CommandMore = styled.button`
  display: grid;
  place-items: center;
  height: 35px;
  margin-top: auto;
`;

/* ---------- palette and status bar ---------- */

const Palette = styled.div`
  display: flex;
  align-items: flex-end;
  height: 34px;
  padding-bottom: 1px;
`;
const BigSwatch = styled.button<{ $c: string; $w?: number }>`
  width: ${(p) => p.$w ?? 33}px;
  height: 33px;
  margin-right: 1px;
  background: ${(p) => p.$c};
`;
const Swatches = styled.div`
  display: grid;
  grid-auto-flow: column;
  grid-auto-columns: 1fr;
  gap: 1px;
  flex: 1;
  height: 16px;
`;
const Swatch = styled.button<{ $c: string }>`
  background: ${(p) => p.$c};
`;
const PaletteNav = styled.div`
  display: flex;
  align-items: center;
  width: 84px;
  height: 28px;
  padding-left: 10px;
`;
const NavButton = styled.button`
  width: 31px;
  padding: 4px 0;
`;
const ListButton = styled.button`
  display: grid;
  place-items: center;
  flex: none;
  width: 20px;
  height: 28px;
  margin-left: -14px;
  margin-left: auto;
  border: 1px solid #0c0c0c;
  border-radius: 5px;
`;

const dimmed = (hex: string) =>
  "#" + [0, 2, 4].map((i) => Math.round(parseInt(hex.slice(i, i + 2), 16) * 0.69).toString(16).padStart(2, "0")).join("");

const paletteColors = (
  "1a1a1a 333333 4d4d4d 666666 999999 b3b3b3 cccccc e6e6e6 ececec f2f2f2 f9f9f9 " +
  "800000 ff0000 808000 ffff00 008000 00ff00 008080 00ffff 000080 0000ff 800080 ff00ff " +
  "2b0000 550000 800000 aa0000 d40000 ff0000 ff2a2a ff5555 ff8080 ffaaaa ffd5d5 " +
  "280b0b 501616 782121 a02c2c c83737 d35f5f de8787 e9afaf f4d7d7 " +
  "241c1c 483737 6c5353 916f6f ac9393 c8b7b7 e3dbdb " +
  "2b1100 552200 803300 aa4400 d45500 ff6600 ff7f2a ff9955 ffb380 ffccaa ffe6d5 " +
  "28170b 502d16 784421 a05a2c c87137 d38d5f deaa87 e9c6af f4e3d7 " +
  "241f1c 483e37 6c5d53 917c6f ac9d93 c8beb7 e3dedb " +
  "2b2200 554400 806600 aa8800 d4aa00 ffcc00 ffd42a ffdd55 ffe680 ffeeaa fff6d5 " +
  "28220b 504416 786721 a0892c c8ab37 d3bc5f decd87 e9ddaf f4eed7 " +
  "24221c 484537 6c6753"
).split(" ").map(dimmed);

const Status = styled.footer`
  display: flex;
  align-items: center;
  height: 39px;
  padding-bottom: 1px;
  white-space: nowrap;
`;
const Pairs = styled.dl<{ $cols: string; $right?: boolean }>`
  display: grid;
  grid-template-columns: ${(p) => p.$cols};
  margin: 0;
  & dt { text-align: ${(p) => (p.$right ? "right" : "left")}; }
  & dd { margin: 0; text-align: right; }
`;
const StatusLabel = styled.label<{ $w: number; $before: number }>`
  width: ${(p) => p.$w}px;
  margin-left: ${(p) => p.$before}px;
`;
const LayerButton = styled.button`
  display: flex;
  align-items: center;
  gap: 6px;
  height: 20px;
  margin-left: 14px;
  padding-left: 6px;
  border-left: 3px solid #7d3c8c;
`;
const StatusIcon = styled.button<{ $before: number }>`
  margin-left: ${(p) => p.$before}px;
`;
const Hint = styled.p`
  flex: 1;
  margin: 0 0 0 8px;
  padding-left: 7px;
  border-left: 1px solid #1e1e1e;
  line-height: 28px;
  & b { font-weight: 600; }
`;

/* ---------- crash dialog ---------- */

const Overlay = styled.div`
  position: fixed;
  inset: 0;
  display: grid;
  place-items: center;
  padding: 2px 2px 0 0;
`;
const Dialog = styled.div`
  display: flex;
  flex-direction: column;
  width: 628px;
  padding: 25px 10px 1px;
  border: 1px solid #1a1a1a;
  border-top-color: #454545;
  border-radius: 9px;
  background: #343434;
  color: #ededed;
`;
const DialogTitle = styled.h2`
  margin: 0;
  font-size: 16px;
  line-height: 24px;
  font-weight: 600;
  text-align: center;
`;
const DialogText = styled.p`
  margin: 8px 10px 0 35px;
  & a { color: #3a7cd2; }
`;
const Backups = styled.p`
  margin: 11px auto 0;
  & span { display: block; padding-left: 30px; }
`;
const Trace = styled.textarea`
  height: 48px;
  margin-top: 29px;
  padding: 1px;
  border: 1px solid #1b1b1b;
  background: #2b2b2b;
  color: #ededed;
  resize: none;
  overflow: hidden;
  white-space: pre;
`;
const OkButton = styled.button`
  align-self: flex-end;
  width: 85px;
  height: 44px;
  margin-top: 2px;
  border-top: 1px solid #1e1e1e;
  color: #ededed;
`;

export default function App() {
  return (
    <Window>
      <Global />
      <TopBars />
      <Main>
        <Toolbox>
          {toolGroups.map((group, i) => (
            <ToolGroup key={i}>
              {group.map(([name, art]) => (
                <Tool key={name} $on={name === "Pen"} aria-label={name}><Glyph>{art}</Glyph></Tool>
              ))}
            </ToolGroup>
          ))}
        </Toolbox>
        <Canvas />
        <Splitter><svg width="3" height="13"><path d="M0 0h3v3H0zM0 5h3v3H0zM0 10h3v3H0z" fill={c.icon} /></svg></Splitter>
        <DockPanel />
        <CommandBar>
          {commandGroups.map((group, i) => (
            <CommandGroup key={i}>
              {group.map(([name, art]) => (
                <Command key={name} aria-label={name}><Glyph>{art}</Glyph></Command>
              ))}
            </CommandGroup>
          ))}
          <CommandGroup />
          <CommandMore aria-label="More commands"><svg width="6" height="12"><path d="M0 0v12l6-6z" fill={c.icon} /></svg></CommandMore>
        </CommandBar>
      </Main>
      <Palette>
        <BigSwatch $c="#b0b0b0" $w={32} aria-label="No color"><svg width="32" height="33"><path d="M1 2l29 29M30 2L1 31" stroke="#8a1524" strokeWidth="2" /></svg></BigSwatch>
        <BigSwatch $c="#000000" aria-label="Black" />
        <BigSwatch $c="#585858" aria-label="Gray" />
        <BigSwatch $c="#b0b0b0" aria-label="White" />
        <Swatches>
          {paletteColors.map((color, i) => <Swatch key={i} $c={color} aria-label={color} />)}
        </Swatches>
        <PaletteNav>
          <NavButton aria-label="Previous colors"><svg width="12" height="8"><path d="M1 7l5-5 5 5" fill="none" {...S} /></svg></NavButton>
          <NavButton aria-label="Next colors"><svg width="12" height="8"><path d="M1 1l5 5 5-5" fill="none" {...S} /></svg></NavButton>
          <ListButton aria-label="Palette menu"><svg width="14" height="13"><path d="M0 1h14M0 6h14M0 11h14" {...S} /></svg></ListButton>
        </PaletteNav>
      </Palette>
      <Status>
        <Pairs $cols="46px 53px" $right>
          <dt>Fill:</dt><dd>N/A</dd>
          <dt>Stroke:</dt><dd>N/A</dd>
        </Pairs>
        <StatusLabel htmlFor="object-opacity" $w={17} $before={57}>O:</StatusLabel>
        <Spin id="object-opacity" label="Opacity" value="100" w={72} h={37} dim />
        <LayerButton>Alzado</LayerButton>
        <StatusIcon $before={20} aria-label="Toggle layer visibility">
          <Glyph><path d="M2 1l2 4M8 0v4M14 1l-2 4M1 7q7-6 14 0" stroke={c.icon} strokeWidth="1.500" /><circle cx="8" cy="9" r="5" {...S} /><circle cx="8" cy="8.500" r="2" fill={c.icon} /></Glyph>
        </StatusIcon>
        <StatusIcon $before={21} aria-label="Toggle layer lock">
          <Glyph><path d="M1 7h9v8H1z" fill={c.icon} /><path d="M8 7V4q0-3 2.500-3T13 4v3" {...S} /></Glyph>
        </StatusIcon>
        <Hint>
          <b>Click</b> or <b>click and drag</b> to start a path; with <b>Shift</b> to append to selected path. <b>Ctrl+click</b> to create single dots (straight line modes only).
        </Hint>
        <Pairs $cols="14px 61px">
          <dt>X:</dt><dd>192.79</dd>
          <dt>Y:</dt><dd>236.22</dd>
        </Pairs>
        <StatusLabel htmlFor="zoom" $w={13} $before={10}>Z:</StatusLabel>
        <Spin id="zoom" label="Zoom" value="54%" w={106} h={37} step={21} pad={10} lit />
        <StatusLabel htmlFor="rotation" $w={13} $before={10}>R:</StatusLabel>
        <Spin id="rotation" label="Rotation" value="0.00°" w={115} h={37} step={21} pad={12} lit />
        <Divider as="span" $gap={13} />
      </Status>
      <Overlay>
        <Dialog role="alertdialog" aria-labelledby="crash-title">
          <DialogTitle id="crash-title">Inkscape has crashed and will now close.</DialogTitle>
          <DialogText>
            If you can reproduce this crash, please <a href="#bug">file a bug</a> and include the backtrace from the area below.
          </DialogText>
          <Backups>
            Automatic backups of unsaved documents were done to the following locations:
            <span>/home/notarobot/New document 1.2024_10_03_15_22_25.0.svg</span>
          </Backups>
          <Trace
            readOnly
            wrap="off"
            aria-label="Backtrace"
            defaultValue={"<pre>\n 0# Inkscape::Application::crash_handler(int) in /usr/bin/../lib64/inkscape/libinkscape_base.so\n 1# 0x00007FF73444FD00 in /lib64/libc.so.6"}
          />
          <OkButton>OK</OkButton>
        </Dialog>
      </Overlay>
    </Window>
  );
}
